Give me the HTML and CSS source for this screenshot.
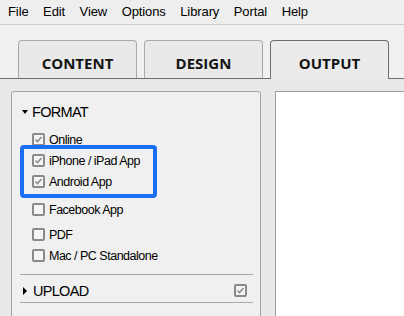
FILE: index.html
```html
<!DOCTYPE html>
<html>
    <head>
        <title>output</title>
        <link rel="stylesheet" href="styles.css">
    </head>
    <body>
        <div class="menubar">
            <span>File</span>
            <span>Edit</span>
            <span>View</span>
            <span>Options</span>
            <span>Library</span>
            <span>Portal</span>
            <span>Help</span>
        </div>
        <div class="tabs">
            <div class="tab">CONTENT</div>
            <div class="tab">DESIGN</div>
            <div class="tab active">OUTPUT</div>
        </div>
        <div class="main">
            <div class="panel">
                <div class="head"><span class="tri-down"></span>FORMAT</div>
                <div class="opt">
                    <svg class="cb" width="13" height="13"><rect x="1" y="1" width="11" height="11" rx="1"/><polyline points="3.5,6.5 5.5,8.5 9.5,4"/></svg>
                    Online
                </div>
                <div class="opt">
                    <svg class="cb" width="13" height="13"><rect x="1" y="1" width="11" height="11" rx="1"/><polyline points="3.5,6.5 5.5,8.5 9.5,4"/></svg>
                    iPhone / iPad App
                </div>
                <div class="opt">
                    <svg class="cb" width="13" height="13"><rect x="1" y="1" width="11" height="11" rx="1"/><polyline points="3.5,6.5 5.5,8.5 9.5,4"/></svg>
                    Android App
                </div>
                <div class="opt fb">
                    <svg class="cb" width="13" height="13"><rect x="1" y="1" width="11" height="11" rx="1"/></svg>
                    Facebook App
                </div>
                <div class="opt pdf">
                    <svg class="cb" width="13" height="13"><rect x="1" y="1" width="11" height="11" rx="1"/></svg>
                    PDF
                </div>
                <div class="opt">
                    <svg class="cb" width="13" height="13"><rect x="1" y="1" width="11" height="11" rx="1"/></svg>
                    Mac / PC Standalone
                </div>
                <div class="highlight"></div>
                <div class="sep"></div>
                <div class="head upload">
                    <span class="tri-right"></span>UPLOAD
                    <svg class="cb end" width="13" height="13"><rect x="1" y="1" width="11" height="11" rx="1"/><polyline points="3.5,6.5 5.5,8.5 9.5,4"/></svg>
                </div>
                <div class="sep"></div>
            </div>
            <div class="preview"></div>
        </div>
    </body>
</html>
```

FILE: styles.css
```css
* {
    margin: 0px;
    padding: 0px;
    box-sizing: border-box;
}
body {
    width: 404px;
    height: 316px;
    overflow: hidden;
    background: #f0f0f0;
    font-family: "Liberation Sans", Arial, sans-serif;
    color: #000;
}
.menubar {
    height: 25px;
    display: flex;
    align-items: center;
    gap: 14.5px;
    padding-left: 8px;
    padding-bottom: 1px;
    font-size: 13px;
    letter-spacing: -0.1px;
    background: #eeeeee;
    border-bottom: 1px solid #cccccc;
}
.tabs {
    display: flex;
    gap: 7px;
    padding: 15px 0 0 18px;
    height: 54px;
    border-bottom: 1px solid #6e6e6e;
    background: #f0f0f0;
}
.tab {
    width: 119px;
    height: 38px;
    border: 1px solid #a9a9a9;
    border-bottom: none;
    border-radius: 4px 4px 0 0;
    background: #e9e9e9;
    font-family: "Open Sans", sans-serif;
    font-weight: bold;
    font-size: 15px;
    color: #141414;
    display: flex;
    align-items: center;
    justify-content: center;
    padding-top: 7px;
}
.tab.active {
    height: 39px;
    margin-bottom: -1px;
    padding-bottom: 1px;
    border-color: #6e6e6e;
    background: #ebebeb;
}
.main {
    display: flex;
    height: 237px;
    padding: 12px 0 0 11px;
    background: #e8e8e8;
}
.panel {
    position: relative;
    width: 250px;
    height: 240px;
    padding: 9px 7px 0 8px;
    border: 1px solid #a2a2a2;
    border-radius: 3px 3px 0 0;
    background: #f0f0f0;
}
.head {
    height: 22px;
    display: flex;
    align-items: center;
    padding-left: 2px;
    font-size: 14.5px;
    letter-spacing: -0.7px;
}
.tri-down {
    width: 0;
    height: 0;
    border-left: 3.5px solid transparent;
    border-right: 3.5px solid transparent;
    border-top: 4px solid #000;
    margin-right: 4px;
}
.tri-right {
    width: 0;
    height: 0;
    border-top: 4px solid transparent;
    border-bottom: 4px solid transparent;
    border-left: 4px solid #000;
    margin: 0 6px 0 1px;
}
.opt {
    height: 21px;
    display: flex;
    align-items: center;
    gap: 4px;
    padding-left: 12px;
    font-size: 12.5px;
    letter-spacing: -0.5px;
}
.opt:nth-child(2) {
    margin-top: 6px;
}
.opt.fb {
    margin-top: 7px;
}
.opt.pdf {
    margin-top: 4px;
}
.cb rect {
    fill: #f5f5f5;
    stroke: #8a8a8a;
    stroke-width: 2;
}
.cb polyline {
    fill: none;
    stroke: #8a8a8a;
    stroke-width: 1.6;
}
.cb.end {
    margin-left: auto;
    margin-right: 6px;
}
.highlight {
    position: absolute;
    left: 8px;
    top: 53px;
    width: 137px;
    height: 53px;
    border: 4px solid #1a6ff0;
    border-radius: 4px;
}
.sep {
    height: 1px;
    background: #a8a8a8;
    margin-top: 8px;
}
.head.upload {
    height: 27px;
    margin: 0;
    padding-top: 4px;
}
.head.upload + .sep {
    margin-top: 0;
}
.preview {
    flex: 1;
    margin-left: 14px;
    height: 240px;
    border-top: 1px solid #9c9c9c;
    border-left: 1px solid #9c9c9c;
    background: #fff;
}
```
